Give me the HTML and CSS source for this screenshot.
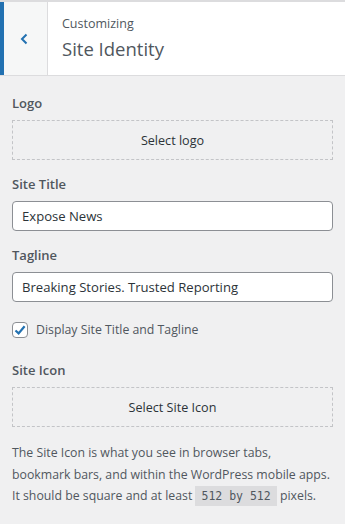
FILE: index.html
```html
<!DOCTYPE html>
<html lang="en">
<head>
    <meta charset="UTF-8">
    <meta name="viewport" content="width=device-width, initial-scale=1.0">
    <title>Customizing Site Identity</title>
    <link rel="stylesheet" href="styles.css">
</head>
<body>
    <div id="header">
        <div id="back">
            <svg width="20" height="20" viewBox="0 0 20 20">
                <path d="M12.5 5.5 L8 10 L12.5 14.5" fill="none" stroke="#2271b1" stroke-width="2"/>
            </svg>
        </div>
        <div id="titles">
            <span class="crumb">Customizing</span>
            <h3>Site Identity</h3>
        </div>
    </div>
    <div id="controls">
        <div class="control">
            <span class="label">Logo</span>
            <button class="picker">Select logo</button>
        </div>
        <div class="control">
            <span class="label">Site Title</span>
            <input type="text" value="Expose News">
        </div>
        <div class="control">
            <span class="label">Tagline</span>
            <input type="text" value="Breaking Stories. Trusted Reporting">
        </div>
        <div class="control check">
            <span class="box">
                <svg width="14" height="14" viewBox="0 0 14 14">
                    <path d="M2.5 7.5 L5.6 10.4 L11.6 3.2" fill="none" stroke="#2271b1" stroke-width="2.2"/>
                </svg>
            </span>
            <span>Display Site Title and Tagline</span>
        </div>
        <div class="control">
            <span class="label">Site Icon</span>
            <button class="picker">Select Site Icon</button>
            <p class="desc">The Site Icon is what you see in browser tabs,<br>bookmark bars, and within the WordPress mobile apps.<br>It should be square and at least <code>512 by 512</code> pixels.</p>
        </div>
    </div>
</body>
</html>
```

FILE: styles.css
```css
body {
    margin: 0;
    background-color: #f0f0f1;
    font-family: "Segoe UI", "Open Sans", sans-serif;
    color: #50575e;
}
#header {
    display: flex;
    height: 73px;
    background-color: #fff;
    border-top: 2px solid #dcdcde;
    border-bottom: 1px solid #dcdcde;
}
#back {
    width: 43px;
    background-color: #f6f7f7;
    border-left: 4px solid #2271b1;
    border-right: 1px solid #dcdcde;
    display: flex;
    align-items: center;
    justify-content: center;
}
#back svg {
    margin: 0 4px 0 0;
}
#titles {
    padding: 12px 14px;
}
.crumb {
    display: block;
    font-size: 12.5px;
    line-height: 20px;
    color: #50575e;
}
#titles h3 {
    margin: 2px 0 0;
    font-size: 18.5px;
    font-weight: 400;
    line-height: 26px;
    color: #50575e;
}
#controls {
    padding: 17px 12px;
}
.control {
    display: flex;
    flex-direction: column;
    margin-bottom: 14px;
}
.label {
    font-size: 13px;
    font-weight: 600;
    line-height: 20px;
    margin-bottom: 7px;
    color: #50575e;
}
.picker {
    height: 40px;
    background: none;
    border: 1px dashed #c3c4c7;
    font-family: inherit;
    font-size: 12.6px;
    color: #2c3338;
}
input {
    height: 30px;
    box-sizing: border-box;
    border: 1px solid #8c8f94;
    border-radius: 4px;
    padding: 0 9px;
    font-family: inherit;
    font-size: 13.1px;
    color: #2c3338;
    background-color: #fff;
}
.check {
    flex-direction: row;
    align-items: center;
    gap: 8px;
    font-size: 12.3px;
    margin: 19px 0 22px;
}
.box {
    width: 14px;
    height: 14px;
    border: 1px solid #8c8f94;
    border-radius: 4px;
    background-color: #fff;
    display: flex;
}
.desc {
    margin: 15px 0 0;
    font-size: 12.3px;
    line-height: 21.5px;
    white-space: nowrap;
}
code {
    font-family: "DejaVu Sans Mono", monospace;
    font-size: 11.5px;
    background-color: #dcdcde;
    padding: 3px 6px;
}
```
